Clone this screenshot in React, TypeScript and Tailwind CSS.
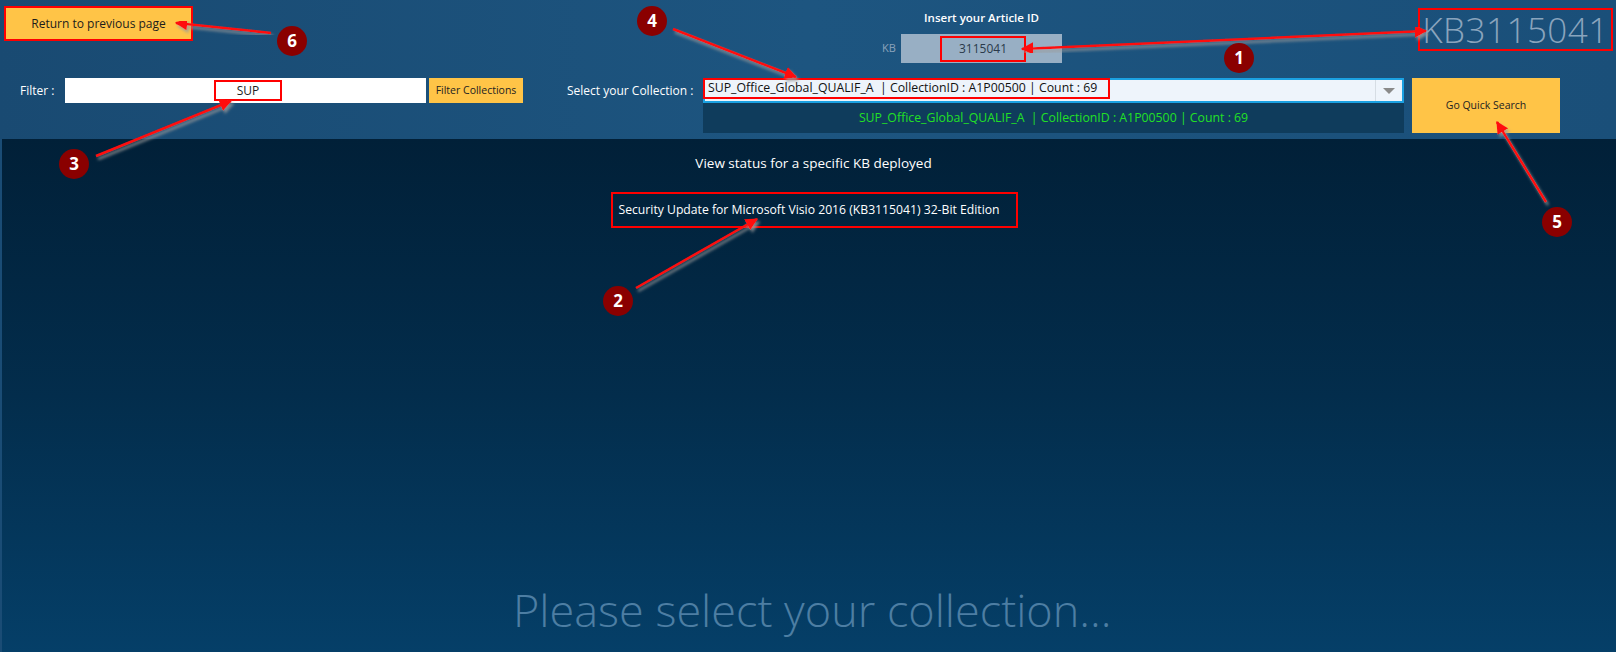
import React from 'react';

const font = { fontFamily: '"Open Sans", "Noto Sans", sans-serif' };

const Marker: React.FC<{ n: number; x: number; y: number }> = ({ n, x, y }) => (
  <div
    className="absolute w-[30px] h-[30px] -ml-[15px] -mt-[15px] rounded-full bg-[#8a0000] text-white text-[17px] leading-[30px] text-center font-bold"
    style={{ left: x, top: y }}
  >
    {n}
  </div>
);

const Annotations: React.FC = () => {
  const arrows = [
    { x1: 271, y1: 33, x2: 176, y2: 23 },
    { x1: 96, y1: 156, x2: 231, y2: 101 },
    { x1: 673, y1: 29, x2: 796, y2: 77 },
    { x1: 636, y1: 288, x2: 757, y2: 219 },
    { x1: 1546, y1: 202, x2: 1497, y2: 122 },
  ];
  return (
    <div className="absolute inset-0 pointer-events-none">
      <svg className="absolute inset-0 w-full h-full">
        <defs>
          <marker id="head" viewBox="0 0 10 10" refX="9" refY="5" markerWidth="5" markerHeight="5" orient="auto-start-reverse">
            <path d="M0 0 L10 5 L0 10 z" fill="#ff1010" />
          </marker>
          <filter id="shadow" x="-20%" y="-20%" width="140%" height="140%">
            <feDropShadow dx="2" dy="3" stdDeviation="1.5" floodColor="#9a9a9a" floodOpacity="0.8" />
          </filter>
        </defs>
        {arrows.map((a, i) => (
          <line key={i} {...a} stroke="#ff1010" strokeWidth="2.5" markerEnd="url(#head)" filter="url(#shadow)" />
        ))}
        <line x1={1022} y1={49} x2={1426} y2={31} stroke="#ff1010" strokeWidth="2.5" markerStart="url(#head)" markerEnd="url(#head)" filter="url(#shadow)" />
      </svg>
      <Marker n={6} x={292} y={41} />
      <Marker n={3} x={74} y={164} />
      <Marker n={4} x={652} y={21} />
      <Marker n={1} x={1239} y={58} />
      <Marker n={2} x={618} y={301} />
      <Marker n={5} x={1557} y={222} />
    </div>
  );
};

const App: React.FC = () => {
  return (
    <div className="relative w-[1616px] h-[652px] overflow-hidden bg-[#1a4c75] flex flex-col" style={font}>
      {/* header */}
      <div className="h-[139px] shrink-0 bg-gradient-to-r from-[#194a72] via-[#1d5580] to-[#1a4f79] flex flex-col pt-[6px]">
        <div className="h-[72px] flex items-start">
          <button className="ml-[4px] w-[189px] h-[35px] bg-[#ffc447] border-2 border-[#ff0000] text-[12px] text-[#1c1c1c] flex items-center justify-center">
            Return to previous page
          </button>
          <div className="ml-[689px] w-[180px] flex flex-col">
            <div className="pl-[19px] mt-[4px] text-center text-white text-[11.5px] font-semibold leading-[16px]">
              Insert your Article ID
            </div>
            <div className="mt-[8px] flex items-center">
              <span className="w-[19px] text-[11px] text-[#8ba3bb]">KB</span>
              <div className="w-[161px] h-[29px] bg-[#98afc4] flex items-center">
                <span className="ml-[39px] w-[86px] h-[26px] border-2 border-[#ff0000] text-[12px] text-[#2a3a4a] flex items-center justify-center">
                  3115041
                </span>
              </div>
            </div>
          </div>
          <div className="ml-auto mr-[3px] mt-[2px] w-[195px] h-[43px] border-2 border-[#ff0000] flex items-center justify-center">
            <span className="text-[35px] font-light text-[#8aa4bd] leading-none tracking-[0.5px]">KB3115041</span>
          </div>
        </div>
        <div className="flex items-start">
          <span className="ml-[20px] w-[45px] h-[25px] flex items-center text-[12px] text-white">Filter :</span>
          <div className="w-[361px] h-[25px] bg-white flex items-center justify-center">
            <span className="ml-[5px] w-[68px] h-[21px] border-2 border-[#ff0000] text-[12px] text-[#222] flex items-center justify-center">SUP</span>
          </div>
          <button className="ml-[3px] w-[94px] h-[25px] bg-[#ffc447] text-[10.5px] text-[#222] flex items-center justify-center">
            Filter Collections
          </button>
          <span className="ml-[44px] w-[136px] h-[25px] flex items-center text-[12px] text-white">Select your Collection :</span>
          <div className="w-[701px] flex flex-col">
            <div className="relative h-[25px] bg-[#eef4fb] border-2 border-[#1ba1e2] flex items-center">
              <span className="absolute -left-[2px] -top-[2px] w-[407px] h-[21px] border-2 border-[#ff0000] pl-[3px] flex items-center text-[12.3px] text-[#111] whitespace-pre">
                SUP_Office_Global_QUALIF_A  | CollectionID : A1P00500 | Count : 69
              </span>
              <div className="ml-auto w-[27px] h-full border-l border-[#d6dde4] flex items-center justify-center">
                <div className="w-0 h-0 border-l-[6px] border-r-[6px] border-t-[6px] border-l-transparent border-r-transparent border-t-[#8a8a8a]" />
              </div>
            </div>
            <div className="h-[30px] bg-[#0f3c5c] flex items-center justify-center text-[12.3px] text-[#22e025] whitespace-pre">
              SUP_Office_Global_QUALIF_A  | CollectionID : A1P00500 | Count : 69
            </div>
          </div>
          <button className="ml-[8px] w-[148px] h-[55px] bg-[#ffc447] text-[10.5px] text-[#222] flex items-center justify-center">
            Go Quick Search
          </button>
        </div>
      </div>

      {/* body */}
      <div className="flex-1 ml-[2px] bg-gradient-to-b from-[#012038] via-[#032d4c] to-[#053f68] flex flex-col items-center">
        <div className="mt-[14px] ml-[9px] text-[13.5px] leading-[20px] text-white">View status for a specific KB deployed</div>
        <div className="mt-[19px] ml-[10px] w-[407px] h-[36px] border-2 border-[#ff0000] flex items-center pl-[6px] text-[12.2px] text-white">
          Security Update for Microsoft Visio 2016 (KB3115041) 32-Bit Edition
        </div>
        <div className="mt-auto mb-[15px] self-start ml-[511px] text-[45px] font-light leading-[54px] text-[#4d7ea3]">
          Please select your collection...
        </div>
      </div>

      <Annotations />
    </div>
  );
};

export default App;
